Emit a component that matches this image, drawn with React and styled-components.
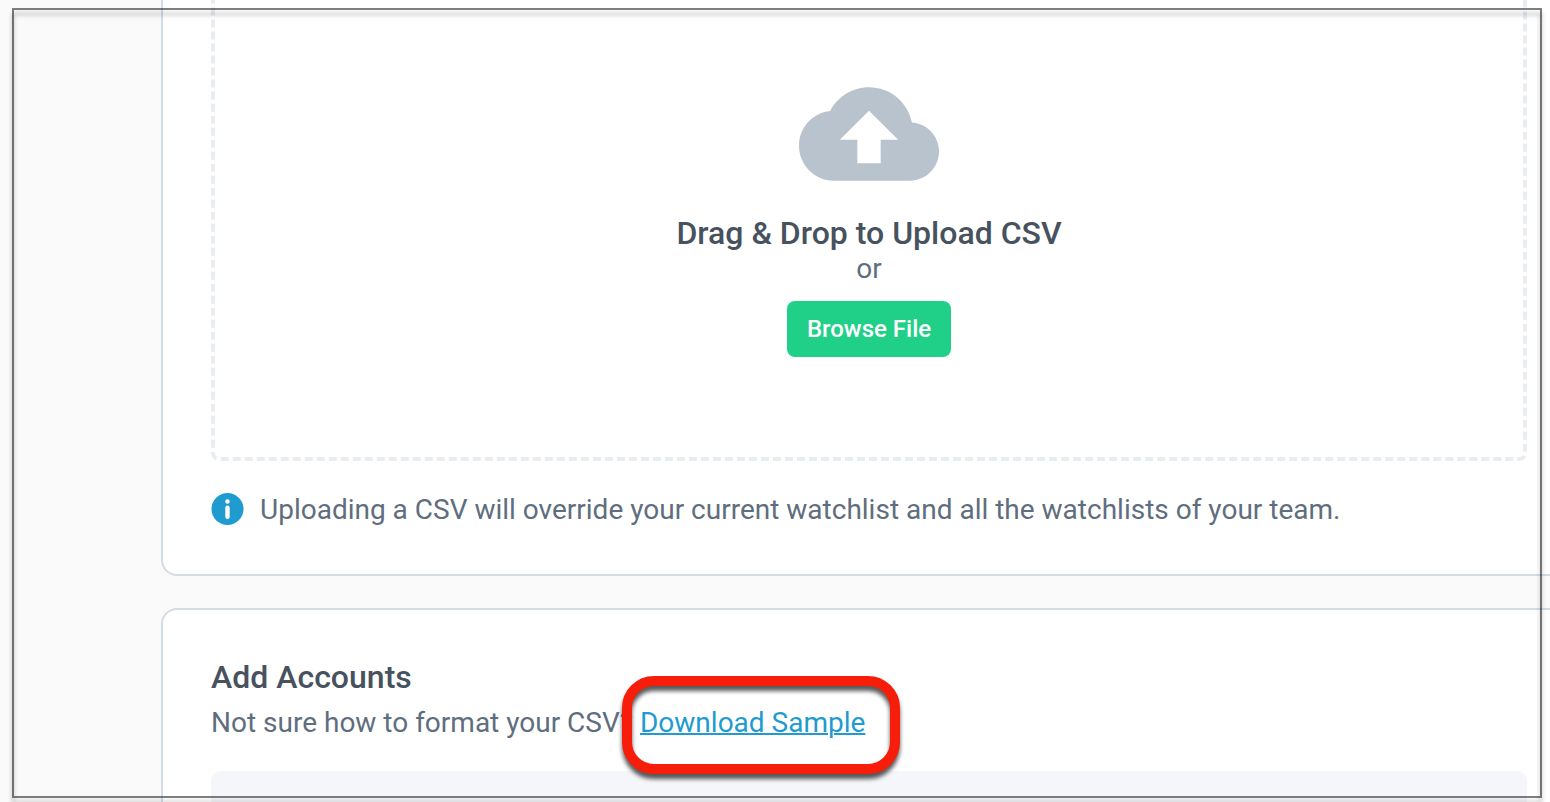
import React from "react";
import styled, { createGlobalStyle } from "styled-components";

const GlobalStyle = createGlobalStyle`
  * { box-sizing: border-box; }
  body {
    margin: 0;
    background: #fafafa;
    color: #5f6e7e;
    font: 400 28px/32px Roboto, "Liberation Sans", sans-serif;
  }
`;

const Page = styled.main`
  position: relative;
  display: flex;
  flex-direction: column;
  gap: 32px;
  height: 100vh;
  overflow: hidden;
  padding-left: 161px;
`;

const Card = styled.section`
  flex: ${(p) => (p.$grow ? "1 0 auto" : "none")};
  display: flex;
  flex-direction: column;
  margin-right: -27px;
  padding: ${(p) => (p.$grow ? "47px 48px 0" : "0 48px 47px")};
  background: #fff;
  border: 2px solid #d3dce6;
  border-width: ${(p) => (p.$grow ? "2px 2px 0" : "0 2px 2px")};
  border-radius: ${(p) => (p.$grow ? "16px 16px 0 0" : "0 0 16px 16px")};
`;

const DropZone = styled.div`
  display: flex;
  flex-direction: column;
  align-items: center;
  margin-top: -20px;
  padding: 103px 0 100px;
  border: 4px dashed #e8edf1;
  border-radius: 8px;
`;

const CloudIcon = styled.svg`
  width: 140px;
  height: 94px;
  margin-bottom: 32px;
  fill: #b9c3ce;
`;

const Heading = styled.h2`
  margin: 0;
  color: #47525e;
  font-size: 32px;
  font-weight: 500;
  line-height: 40px;
`;

const BrowseButton = styled.button`
  height: 56px;
  margin-top: 16px;
  padding: 0 20px;
  border: 0;
  border-radius: 8px;
  background: #21d088;
  color: #fff;
  font: inherit;
  font-size: 24px;
  font-weight: 500;
  cursor: pointer;
`;

const Notice = styled.div`
  display: flex;
  align-items: flex-start;
  gap: 16px;
  margin-top: 32px;
  line-height: 34px;
`;

const InfoIcon = styled.svg`
  flex: none;
  width: 33px;
  height: 32px;
`;

const Hint = styled.p`
  margin: 2px 0 0;
  line-height: 48px;
`;

const SampleLink = styled.a`
  position: relative;
  display: inline-block;
  color: #1f9bcf;
  line-height: 32px;
  text-decoration-thickness: 2px;
`;

const Highlight = styled.span`
  position: absolute;
  inset: -31px -35px -35px -18px;
  border: 10px solid #f61e0a;
  border-radius: 32px;
  filter: drop-shadow(0 5px 2px rgba(0, 0, 0, 0.65));
  pointer-events: none;
`;

const Preview = styled.div`
  flex: 1 0 64px;
  margin-top: 24px;
  background: #f5f6fa;
  border-radius: 10px 10px 0 0;
`;

const Frame = styled.div`
  position: absolute;
  inset: 8px 8px 4px 12px;
  border: 2px solid rgba(0, 0, 0, 0.5);
  filter: drop-shadow(0 5px 2px rgba(0, 0, 0, 0.55));
  pointer-events: none;
`;

export default function App() {
  return (
    <>
      <GlobalStyle />
      <Page>
        <Card>
          <DropZone>
            <CloudIcon viewBox="0 4 24 16" aria-hidden="true">
              <path d="M19.35 10.04C18.67 6.59 15.64 4 12 4 9.11 4 6.6 5.64 5.35 8.04 2.34 8.36 0 10.91 0 14c0 3.31 2.69 6 6 6h13c2.76 0 5-2.24 5-5 0-2.64-2.05-4.78-4.65-4.96zM14 13v4h-4v-4H7l5-5 5 5h-3z" />
            </CloudIcon>
            <Heading>Drag &amp; Drop to Upload CSV</Heading>
            <span>or</span>
            <BrowseButton type="button">Browse File</BrowseButton>
          </DropZone>
          <Notice>
            <InfoIcon viewBox="0 0 33 32" aria-hidden="true">
              <circle cx="16.5" cy="16" r="16" fill="#1f9bcf" />
              <circle cx="16.5" cy="8.5" r="2.2" fill="#fff" />
              <rect x="14.3" y="12.5" width="4.4" height="13.5" rx="2.2" fill="#fff" />
            </InfoIcon>
            <span>
              Uploading a CSV will override your current watchlist and all the
              watchlists of your team.
            </span>
          </Notice>
        </Card>
        <Card $grow>
          <Heading>Add Accounts</Heading>
          <Hint>
            Not sure how to format your CSV?{" "}
            <SampleLink href="#sample">
              Download Sample
              <Highlight />
            </SampleLink>
          </Hint>
          <Preview />
        </Card>
        <Frame />
      </Page>
    </>
  );
}
